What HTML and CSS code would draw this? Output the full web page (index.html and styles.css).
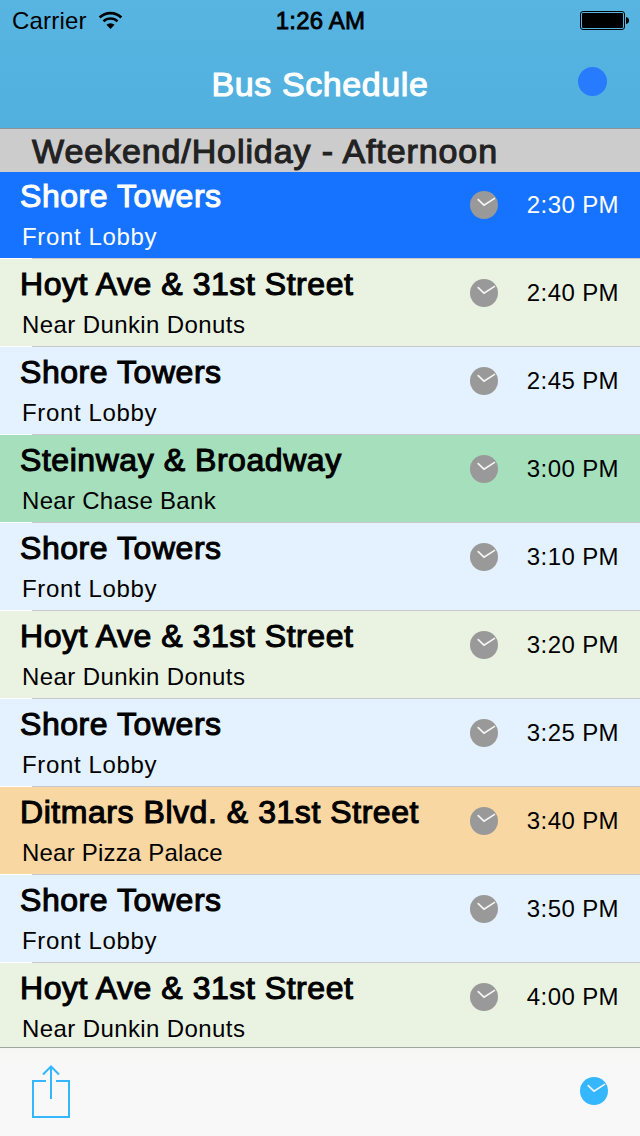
FILE: index.html
```html
<!DOCTYPE html>
<html lang="en">
<head>
    <meta charset="UTF-8">
    <meta name="viewport" content="width=device-width, initial-scale=1.0">
    <title>Bus Schedule</title>
    <link rel="stylesheet" href="styles.css">
</head>
<body>

    <svg class="symbols">
        <symbol id="clock" viewBox="0 0 28 28">
            <circle cx="14" cy="14" r="14" fill="currentColor"/>
            <path d="M7.7 8.2 L14 14.2 L25 7.2" fill="none" stroke="#f7f7f7" stroke-width="1.6"/>
        </symbol>
    </svg>

    <header>
        <div class="status-bar">
            <div class="carrier">
                <span>Carrier</span>
                <svg class="wifi" width="25" height="19" viewBox="0 0 26 20">
                    <path d="M1.6 6.8 A16.3 16.3 0 0 1 24.4 6.8" fill="none" stroke="#000" stroke-width="2.9"/>
                    <path d="M5.6 11 A10.6 10.6 0 0 1 20.4 11" fill="none" stroke="#000" stroke-width="2.7"/>
                    <path d="M13 19 L8.7 14.6 A6.2 6.2 0 0 1 17.3 14.6 Z" fill="#000"/>
                </svg>
            </div>
            <div class="clock-time">1:26 AM</div>
            <svg class="battery" width="49" height="19" viewBox="0 0 49 19">
                <rect x="0.5" y="0.5" width="44" height="18" rx="2.5" fill="none" stroke="#000"/>
                <rect x="2" y="2" width="41" height="15" rx="1" fill="#000"/>
                <path d="M46 6 Q49 6.5 49 9.5 Q49 12.5 46 13 Z" fill="#000"/>
            </svg>
        </div>
        <div class="nav-bar">
            <h1>Bus Schedule</h1>
            <span class="dot"></span>
        </div>
    </header>

    <h2 class="section-title">Weekend/Holiday - Afternoon</h2>

    <ul class="stops">
        <li class="stop current">
            <div class="place"><h3>Shore Towers</h3><p>Front Lobby</p></div>
            <svg class="icon"><use href="#clock"/></svg>
            <span class="time">2:30 PM</span>
        </li>
        <li class="stop hoyt">
            <div class="place"><h3>Hoyt Ave &amp; 31st Street</h3><p>Near Dunkin Donuts</p></div>
            <svg class="icon"><use href="#clock"/></svg>
            <span class="time">2:40 PM</span>
        </li>
        <li class="stop shore">
            <div class="place"><h3>Shore Towers</h3><p>Front Lobby</p></div>
            <svg class="icon"><use href="#clock"/></svg>
            <span class="time">2:45 PM</span>
        </li>
        <li class="stop steinway">
            <div class="place"><h3>Steinway &amp; Broadway</h3><p>Near Chase Bank</p></div>
            <svg class="icon"><use href="#clock"/></svg>
            <span class="time">3:00 PM</span>
        </li>
        <li class="stop shore">
            <div class="place"><h3>Shore Towers</h3><p>Front Lobby</p></div>
            <svg class="icon"><use href="#clock"/></svg>
            <span class="time">3:10 PM</span>
        </li>
        <li class="stop hoyt">
            <div class="place"><h3>Hoyt Ave &amp; 31st Street</h3><p>Near Dunkin Donuts</p></div>
            <svg class="icon"><use href="#clock"/></svg>
            <span class="time">3:20 PM</span>
        </li>
        <li class="stop shore">
            <div class="place"><h3>Shore Towers</h3><p>Front Lobby</p></div>
            <svg class="icon"><use href="#clock"/></svg>
            <span class="time">3:25 PM</span>
        </li>
        <li class="stop ditmars">
            <div class="place"><h3>Ditmars Blvd. &amp; 31st Street</h3><p>Near Pizza Palace</p></div>
            <svg class="icon"><use href="#clock"/></svg>
            <span class="time">3:40 PM</span>
        </li>
        <li class="stop shore">
            <div class="place"><h3>Shore Towers</h3><p>Front Lobby</p></div>
            <svg class="icon"><use href="#clock"/></svg>
            <span class="time">3:50 PM</span>
        </li>
        <li class="stop hoyt">
            <div class="place"><h3>Hoyt Ave &amp; 31st Street</h3><p>Near Dunkin Donuts</p></div>
            <svg class="icon"><use href="#clock"/></svg>
            <span class="time">4:00 PM</span>
        </li>
    </ul>

    <footer class="toolbar">
        <svg class="share" width="38" height="53" viewBox="0 0 38 53" fill="none" stroke="#34b7ff" stroke-width="2">
            <path d="M14 16 H1 V52 H37 V16 H24"/>
            <path d="M19 34 V2 M11 9.5 L19 1.5 L27 9.5"/>
        </svg>
        <svg class="icon"><use href="#clock"/></svg>
    </footer>

</body>
</html>
```
FILE: styles.css
```css
* {
    box-sizing: border-box;
    margin: 0;
    padding: 0;
}

body {
    width: 640px;
    height: 1136px;
    display: flex;
    flex-direction: column;
    overflow: hidden;
    font-family: "Liberation Sans", Arial, sans-serif;
    background-color: #fff;
    color: #000;
}

h1, h2, h3 {
    font-weight: 400;
    white-space: nowrap;
    -webkit-text-stroke: 1.1px currentColor;
}

.symbols {
    display: none;
}

header {
    height: 129px;
    flex: none;
    background: linear-gradient(#58b5e2, #52b0de);
    border-bottom: 1px solid #8c9396;
}

.status-bar {
    height: 40px;
    padding: 0 11px 0 12px;
    display: grid;
    grid-template-columns: 1fr auto 1fr;
    align-items: center;
    font-size: 24px;
}

.carrier {
    display: flex;
    align-items: center;
    gap: 11px;
    letter-spacing: 0.2px;
}

.carrier span,
.clock-time {
    padding-top: 2px;
}

.clock-time {
    letter-spacing: 0.2px;
    -webkit-text-stroke: 0.8px #000;
}

.battery {
    justify-self: end;
}

.nav-bar {
    height: 88px;
    padding: 0 33px;
    display: grid;
    grid-template-columns: 1fr auto 1fr;
    align-items: center;
    color: #fff;
}

.nav-bar h1 {
    grid-column: 2;
    font-size: 34px;
    letter-spacing: 0.6px;
}

.dot {
    justify-self: end;
    width: 29px;
    height: 29px;
    margin-bottom: 5px;
    border-radius: 50%;
    background-color: #267bff;
}

.section-title {
    height: 43px;
    flex: none;
    padding-left: 32px;
    font-size: 34px;
    line-height: 45px;
    letter-spacing: 0.9px;
    color: #222;
    background-color: #ccc;
}

.stops {
    height: 875px;
    flex: none;
    overflow: hidden;
    list-style: none;
}

.stop {
    height: 88px;
    padding: 7px 21px 0 20px;
    display: flex;
    align-items: flex-start;
    background: linear-gradient(to right, #fff 32px, #c8c8cc 32px) bottom / 100% 1px no-repeat;
}

.place {
    flex: 1;
}

.place h3 {
    font-size: 32px;
    line-height: 36px;
    letter-spacing: 0.55px;
}

.place p {
    padding: 9px 0 0 2px;
    font-size: 24px;
    line-height: 28px;
    letter-spacing: 0.65px;
}

.icon {
    width: 28px;
    height: 28px;
    margin-top: 13px;
    color: #999;
}

.time {
    width: 121px;
    padding-top: 13px;
    font-size: 24px;
    line-height: 28px;
    letter-spacing: 0.4px;
    text-align: right;
}

.current {
    height: 87px;
    padding-top: 6px;
    color: #fff;
    background-color: #1673ff;
}

.hoyt {
    background-color: #eaf3e2;
}

.hoyt p {
    letter-spacing: 0.4px;
}

.shore {
    background-color: #e4f2ff;
}

.steinway {
    background-color: #a5dfbc;
}

.steinway p {
    letter-spacing: 0.3px;
}

.ditmars {
    background-color: #f9d7a2;
}

.ditmars p {
    letter-spacing: 0.2px;
}

.toolbar {
    flex: 1;
    padding: 17px 32px 0;
    display: flex;
    justify-content: space-between;
    border-top: 1px solid #a0a59e;
    background: linear-gradient(#f6f7f4, #f8f8f8 20px);
}

.toolbar .icon {
    margin-top: 12px;
    color: #34b7ff;
}
```
